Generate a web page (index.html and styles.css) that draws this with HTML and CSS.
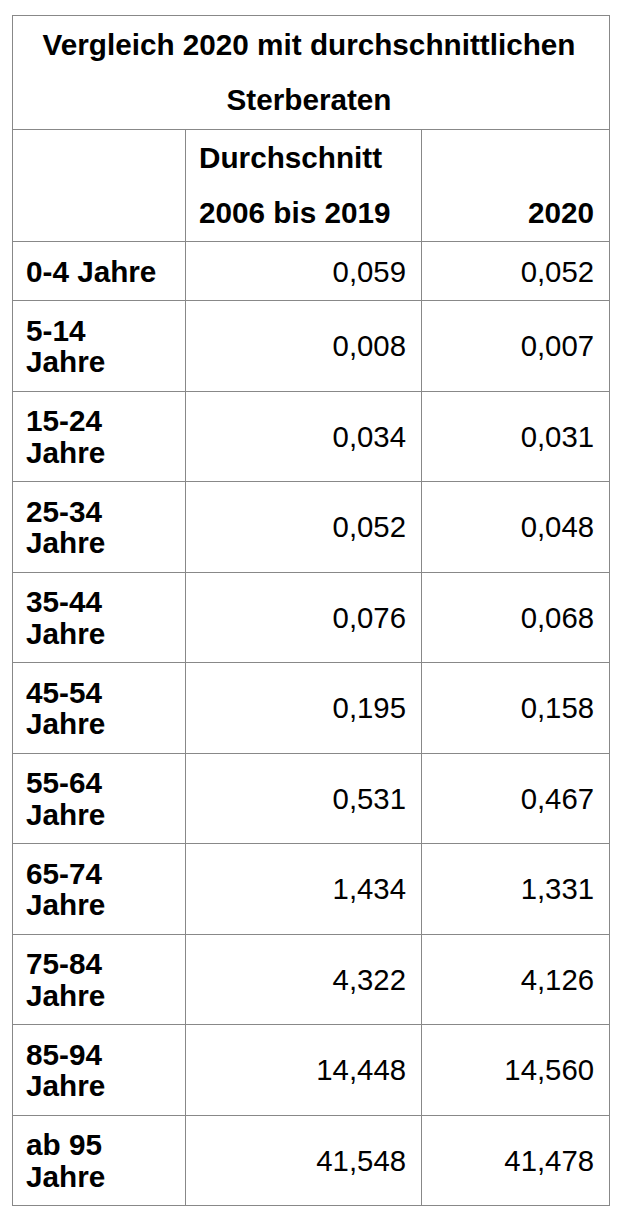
FILE: index.html
```html
<!DOCTYPE html>
<html lang="de">
<head>
<meta charset="utf-8">
<title>Vergleich 2020 mit durchschnittlichen Sterberaten</title>
<link rel="stylesheet" href="styles.css">
</head>
<body>
<table class="rates">
  <colgroup>
    <col class="c-label">
    <col class="c-avg">
    <col class="c-year">
  </colgroup>
  <thead>
    <tr class="title-row">
      <th colspan="3" class="title">Vergleich 2020 mit durchschnittlichen Sterberaten</th>
    </tr>
    <tr class="head-row">
      <th class="head head-label"></th>
      <th class="head head-avg">Durchschnitt<br>2006 bis 2019</th>
      <th class="head head-year">2020</th>
    </tr>
  </thead>
  <tbody>
    <tr><th class="label">0-4 Jahre</th><td class="num">0,059</td><td class="num">0,052</td></tr>
    <tr><th class="label">5-14<br>Jahre</th><td class="num">0,008</td><td class="num">0,007</td></tr>
    <tr><th class="label">15-24<br>Jahre</th><td class="num">0,034</td><td class="num">0,031</td></tr>
    <tr><th class="label">25-34<br>Jahre</th><td class="num">0,052</td><td class="num">0,048</td></tr>
    <tr><th class="label">35-44<br>Jahre</th><td class="num">0,076</td><td class="num">0,068</td></tr>
    <tr><th class="label">45-54<br>Jahre</th><td class="num">0,195</td><td class="num">0,158</td></tr>
    <tr><th class="label">55-64<br>Jahre</th><td class="num">0,531</td><td class="num">0,467</td></tr>
    <tr><th class="label">65-74<br>Jahre</th><td class="num">1,434</td><td class="num">1,331</td></tr>
    <tr><th class="label">75-84<br>Jahre</th><td class="num">4,322</td><td class="num">4,126</td></tr>
    <tr><th class="label">85-94<br>Jahre</th><td class="num">14,448</td><td class="num">14,560</td></tr>
    <tr><th class="label">ab 95<br>Jahre</th><td class="num">41,548</td><td class="num">41,478</td></tr>
  </tbody>
</table>
</body>
</html>
```
FILE: styles.css
```css
html, body {
  margin: 0;
  padding: 0;
  background: #ffffff;
}

body {
  padding: 15px 0 0 12px;
  font-family: "Liberation Sans", Arial, sans-serif;
  font-size: 29.33px;
  color: #000000;
}

.rates {
  border-collapse: collapse;
  table-layout: fixed;
  width: 597px;
}

.c-label { width: 173px; }
.c-avg { width: 236px; }
.c-year { width: 188px; }

.rates th,
.rates td {
  border: 1px solid #888888;
  padding: 13.5px 15px 13px 13px;
  line-height: 31.5px;
  vertical-align: middle;
}

.rates th {
  font-weight: bold;
  font-size: 29.7px;
}

.title-row .title {
  text-align: center;
  line-height: 55px;
  padding: 1px 8px 2px 4px;
}

.head-row .head {
  line-height: 55px;
  padding: 0 15px 1px 13px;
  height: 110px;
  text-align: left;
  vertical-align: bottom;
}

.head-row .head-year {
  text-align: right;
}

.label {
  text-align: left;
}

.num {
  text-align: right;
}
```
